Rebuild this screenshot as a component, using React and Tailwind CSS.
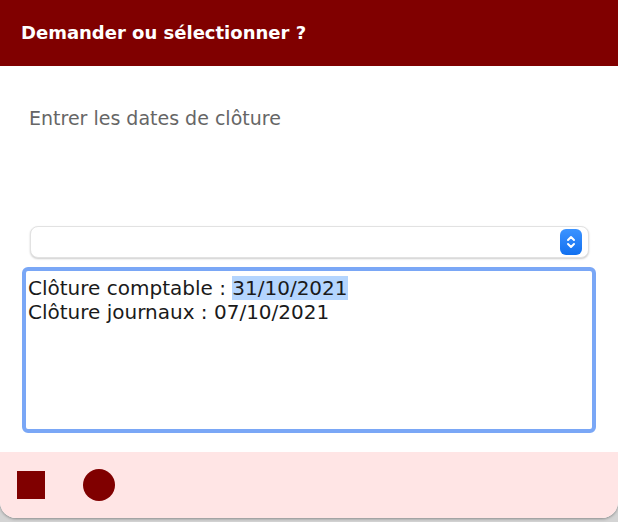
import React from 'react';

const font = {fontFamily: '"DejaVu Sans", "Liberation Sans", sans-serif'};

const SelectArrows = () => (
  <svg width="10" height="16" viewBox="0 0 10 16" fill="none" stroke="white" strokeWidth="2" strokeLinecap="round" strokeLinejoin="round">
    <path d="M2 6 L5 3 L8 6"/>
    <path d="M2 10 L5 13 L8 10"/>
  </svg>
);

const App = () => {
  return (
    <div className={'w-full h-[522px] overflow-hidden bg-[#d4d4d4] flex flex-col'} style={font}>
      <div className={'flex flex-col bg-white rounded-b-[16px] shadow-[0_1px_3px_rgba(0,0,0,0.35)] z-10'}>
        <div className={'flex items-center h-[66px] bg-[#800000] px-[21px]'}>
          <p className={'text-white font-bold text-[18px] leading-[22px]'}>Demander ou sélectionner ?</p>
        </div>
        <div className={'flex flex-col pt-[41px]'}>
          <p className={'pl-[29px] text-[#666666] text-[19px] leading-[22px]'}>Entrer les dates de clôture</p>
          <div className={'mt-[97px] ml-[30px] w-[559px] h-[32px] flex items-center justify-end pr-[6px] bg-white border border-[#e2e2e2] rounded-[8px] shadow-[0_1px_2px_rgba(0,0,0,0.2)]'}>
            <span className={'flex items-center justify-center w-[22px] h-[26px] rounded-[6px] bg-gradient-to-b from-[#3b93ff] to-[#1070f0]'}>
              <SelectArrows/>
            </span>
          </div>
          <div className={'mt-[9px] ml-[22px] w-[574px] h-[166px] border-[4px] border-[#7aa7f6] rounded-[6px] pl-[2px] pt-[5px] text-[20px] leading-[24px] text-[#1a1a1a]'}>
            <p>Clôture comptable : <span className={'bg-[#b4d5fe]'}>31/10/2021</span></p>
            <p>Clôture journaux : 07/10/2021</p>
          </div>
        </div>
        <div className={'mt-[19px] h-[66px] bg-[#ffe5e5] rounded-b-[16px] flex items-center pl-[17px]'}>
          <span className={'w-[28px] h-[28px] bg-[#800000]'}></span>
          <span className={'ml-[38px] w-[32px] h-[32px] rounded-full bg-[#800000]'}></span>
        </div>
      </div>
      <div className={'flex pt-[2px] text-[14px] leading-[16px] text-[#222222]'}>
        <span className={'ml-[147px]'}>545 512,73</span>
        <span className={'ml-[200px]'}>488 488,58</span>
      </div>
    </div>
  );
};

export default App;
